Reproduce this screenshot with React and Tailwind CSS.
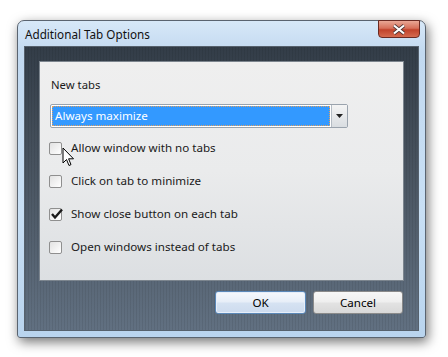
import React from 'react';

const Checkbox = ({ checked }) => (
  <div className="w-[13px] h-[13px] border border-[#8f8f8f] rounded-[2px] bg-[linear-gradient(135deg,#e2e2e2,#ffffff)] relative shrink-0">
    {checked && (
      <svg className="absolute -top-[2px] left-[0px]" width="14" height="14" viewBox="0 0 14 14">
        <path d="M2 7 L5 10.5 L12 2.5" fill="none" stroke="#1a1a1a" strokeWidth="2.4" />
      </svg>
    )}
  </div>
);

const Row = ({ label, checked }) => (
  <div className="flex items-center h-[20px] gap-[9px] -ml-[1px]">
    <Checkbox checked={checked} />
    <span>{label}</span>
  </div>
);

export default function App() {
  return (
    <div className="w-[448px] h-[357px] bg-white relative font-['Noto_Sans',sans-serif] text-[11.6px] text-black">
      <div className="absolute left-[17px] top-[20px] w-[409px] h-[318px] rounded-t-[7px] rounded-b-[3px] border border-[#5a6470] bg-[linear-gradient(180deg,#d7e8f8_0%,#c2d9f0_10%,#c8dff4_60%,#b9d4ee_100%)] shadow-[2px_4px_12px_rgba(0,0,0,0.55)] flex flex-col">
        <div className="h-[25px] flex items-center pl-[7px] relative">
          <span className="text-[11.7px] pt-[2px] text-[#111]">Additional Tab Options</span>
          <div className="absolute right-[5px] top-[-1px] w-[42px] h-[18px] rounded-b-[4px] border border-[#6a2a22] bg-[linear-gradient(180deg,#e9a795_0%,#d6705a_45%,#c1432b_55%,#d56a4f_100%)] flex items-center justify-center">
            <svg width="14" height="11" viewBox="0 0 14 11">
              <path d="M2 1.5 L12 9.5 M12 1.5 L2 9.5" stroke="#4a3434" strokeWidth="3.6" />
              <path d="M2 1.5 L12 9.5 M12 1.5 L2 9.5" stroke="#ffffff" strokeWidth="2.2" />
            </svg>
          </div>
        </div>
        <div className="flex-1 mx-[6px] mb-[6px] border border-[#56616d] bg-[repeating-linear-gradient(90deg,rgba(0,0,0,0.07)_0px,rgba(0,0,0,0.07)_1px,transparent_1px,transparent_3px),linear-gradient(180deg,#333d48_0%,#47525e_40%,#617081_100%)] flex flex-col px-[14px] pt-[14px]">
          <div className="h-[220px] border border-[#7c858e] bg-[linear-gradient(180deg,#efefef_0%,#eaebec_50%,#dcdfe2_100%)] flex flex-col px-[10px] pt-[15px]">
            <div className="pl-[1px] h-[16px] leading-[16px] text-[11.3px] text-[#1a1a1a]">New tabs</div>
            <div className="mt-[11px] h-[24px] w-[298px] border border-[#9aa3ad] rounded-[2px] bg-white flex">
              <div className="flex-1 m-[1px] bg-[#3399ff] border border-dotted border-[#e0a060] text-white flex items-center pl-[2px]">
                Always maximize
              </div>
              <div className="w-[16px] border-l border-[#b5bcc4] bg-[linear-gradient(180deg,#f4f4f4,#d9dde1)] flex items-center justify-center">
                <svg width="7" height="4" viewBox="0 0 7 4"><path d="M0 0 H7 L3.5 4 Z" fill="#222" /></svg>
              </div>
            </div>
            <div className="mt-[10px] flex flex-col gap-[13px] text-[#1a1a1a]">
              <Row label="Allow window with no tabs" />
              <Row label="Click on tab to minimize" />
              <Row label="Show close button on each tab" checked />
              <Row label="Open windows instead of tabs" />
            </div>
          </div>
          <div className="mt-[10px] flex justify-end gap-[7px] pr-[1px]">
            <button className="w-[91px] h-[23px] rounded-[3px] border border-[#5b88b8] bg-[linear-gradient(180deg,#f6f9fd_0%,#e8eff8_45%,#d5e2f2_55%,#cddbee_100%)] shadow-[inset_0_0_0_1px_#e6eef9] text-black">OK</button>
            <button className="w-[90px] h-[23px] rounded-[3px] border border-[#8a8a8a] bg-[linear-gradient(180deg,#f7f7f7_0%,#efefef_45%,#e2e2e2_55%,#d8d8d8_100%)] text-black">Cancel</button>
          </div>
        </div>
      </div>
      <svg className="absolute left-[62px] top-[147px]" width="13" height="20" viewBox="0 0 13 20">
        <path d="M1 1 L1 16 L4.5 12.5 L7 18.5 L9 17.6 L6.6 11.8 L11.5 11.8 Z" fill="#ffffff" stroke="#000" strokeWidth="1" strokeLinejoin="round" />
      </svg>
    </div>
  );
}
